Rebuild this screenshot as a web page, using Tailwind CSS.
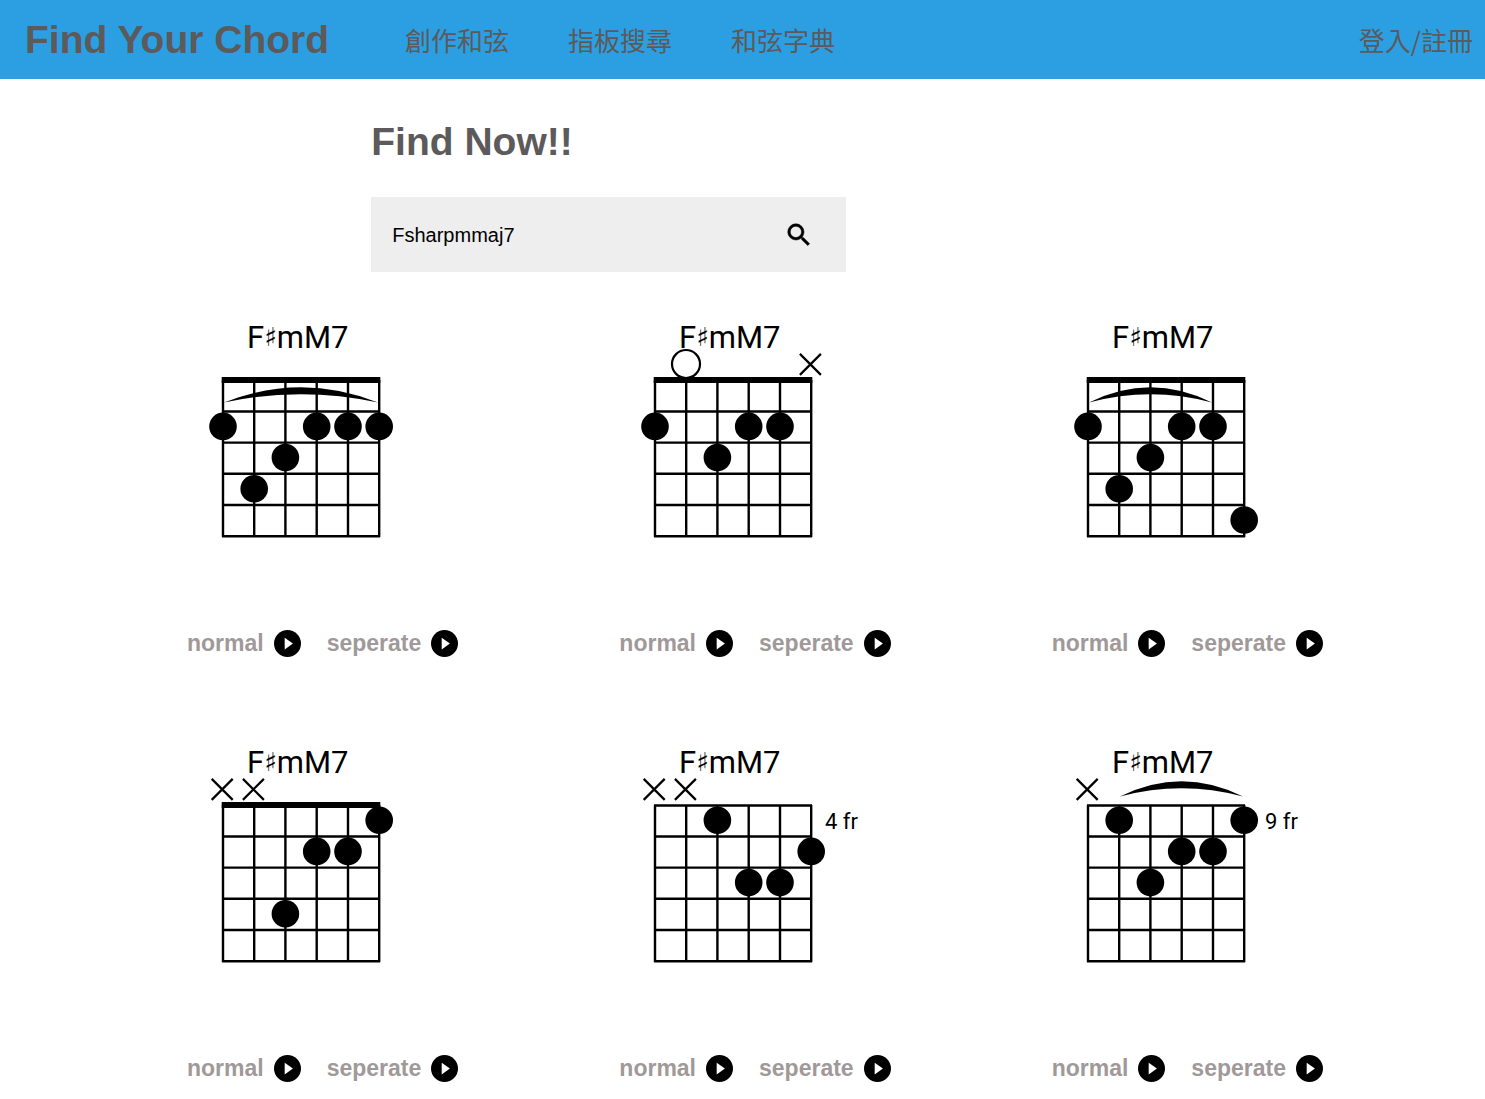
<!DOCTYPE html>
<html lang="zh-Hant">
<head>
<meta charset="utf-8">
<title>Find Your Chord</title>
<script src="https://cdn.jsdelivr.net/npm/@tailwindcss/browser@4"></script>
</head>
<body class="bg-white font-['Liberation_Sans','Noto_Sans_CJK_TC',sans-serif] text-[#5c5a5a]">

<svg class="hidden" aria-hidden="true">
  <symbol id="grid" overflow="visible">
    <path d="M36 65V222M67.2 65V222M98.4 65V222M129.7 65V222M161 65V222M192.2 65V222M35 65.5H193M35 96.5H193M35 127.6H193M35 158.8H193M35 190H193M35 221.2H193" fill="none" stroke="#000" stroke-width="2.4"/>
  </symbol>
  <symbol id="nut" overflow="visible"><path d="M34.7 62H193.3V68H34.7Z"/></symbol>
  <symbol id="dot" overflow="visible"><circle r="13.8"/></symbol>
  <symbol id="mute" overflow="visible"><path d="M-10.5-10.5L10.5 10.5M10.5-10.5L-10.5 10.5" fill="none" stroke="#000" stroke-width="2.2"/></symbol>
  <symbol id="play" viewBox="0 0 26 26"><circle cx="13" cy="13" r="13"/><path d="M10.3 7.5V18.7L18.2 13Z" fill="#fff"/></symbol>
</svg>

<header class="flex h-[79px] items-center bg-[#2c9fe3] pr-3 pl-[25px]">
  <a href="#" class="text-[39px] leading-none font-bold">Find Your Chord</a>
  <nav class="ml-[76px] flex gap-[59px] font-['Noto_Sans_CJK_TC',sans-serif] text-[26px] leading-none">
    <a href="#">創作和弦</a>
    <a href="#">指板搜尋</a>
    <a href="#">和弦字典</a>
  </nav>
  <a href="#" class="ml-auto font-['Noto_Sans_CJK_TC',sans-serif] text-[26px] leading-none">登入/註冊</a>
</header>

<main>
  <section class="ml-[25%] w-[32%] pt-10">
    <h1 class="text-[39px] leading-[46px] font-bold">Find Now!!</h1>
    <form class="mt-8 flex h-[75px] items-center bg-[#eee] pr-8 pl-[21px]">
      <input type="text" aria-label="Chord" value="Fsharpmmaj7" class="min-w-0 flex-1 bg-transparent text-xl text-black outline-none">
      <button type="button" aria-label="Search">
        <svg class="size-[30px]" viewBox="0 0 24 24"><path d="M15.5 14h-.79l-.28-.27A6.47 6.47 0 0 0 16 9.5 6.5 6.5 0 1 0 9.5 16c1.61 0 3.09-.59 4.23-1.57l.27.28v.79l5 4.99L20.49 19l-4.99-5zm-6 0a4.5 4.5 0 1 1 0-9 4.5 4.5 0 0 1 0 9z" fill="#000" stroke="#000" stroke-width=".4"/></svg>
      </button>
    </form>
  </section>

  <section class="mt-[43px] grid grid-cols-3 gap-y-[79px] pr-[81px] pl-[107px]">

    <article class="pl-20">
      <svg class="h-60 w-[260px] fill-black" viewBox="0 0 260 240">
        <text x="60" y="33" class="font-[Roboto,sans-serif] text-[31px]">F<tspan dy="-2" class="font-['DejaVu_Sans'] text-[26px]">♯</tspan><tspan dy="2">mM7</tspan></text>
        <use href="#grid"/><use href="#nut"/>
        <path d="M37 87.5Q114 57 191 87.5Q114 71 37 87.5Z"/>
        <use href="#dot" x="36" y="111.4"/><use href="#dot" x="67.2" y="173.8"/><use href="#dot" x="98.4" y="142.6"/><use href="#dot" x="129.7" y="111.4"/><use href="#dot" x="161" y="111.4"/><use href="#dot" x="192.2" y="111.4"/>
      </svg>
      <div class="mt-[70px] flex h-9 gap-[26px] text-[23px] font-bold text-[#9f9999]">
        <button type="button" class="flex items-center gap-2.5">normal<svg class="size-[27px] fill-black"><use href="#play"/></svg></button>
        <button type="button" class="flex items-center gap-2.5">seperate<svg class="size-[27px] fill-black"><use href="#play"/></svg></button>
      </div>
    </article>

    <article class="pl-20">
      <svg class="h-60 w-[260px] fill-black" viewBox="0 0 260 240">
        <text x="60" y="33" class="font-[Roboto,sans-serif] text-[31px]">F<tspan dy="-2" class="font-['DejaVu_Sans'] text-[26px]">♯</tspan><tspan dy="2">mM7</tspan></text>
        <use href="#grid"/><use href="#nut"/>
        <circle cx="67" cy="49" r="14" fill="none" stroke="#000" stroke-width="2.2"/>
        <use href="#mute" x="191.4" y="49.4"/>
        <use href="#dot" x="36" y="111.4"/><use href="#dot" x="98.4" y="142.6"/><use href="#dot" x="129.7" y="111.4"/><use href="#dot" x="161" y="111.4"/>
      </svg>
      <div class="mt-[70px] flex h-9 gap-[26px] text-[23px] font-bold text-[#9f9999]">
        <button type="button" class="flex items-center gap-2.5">normal<svg class="size-[27px] fill-black"><use href="#play"/></svg></button>
        <button type="button" class="flex items-center gap-2.5">seperate<svg class="size-[27px] fill-black"><use href="#play"/></svg></button>
      </div>
    </article>

    <article class="pl-20">
      <svg class="h-60 w-[260px] fill-black" viewBox="0 0 260 240">
        <text x="60" y="33" class="font-[Roboto,sans-serif] text-[31px]">F<tspan dy="-2" class="font-['DejaVu_Sans'] text-[26px]">♯</tspan><tspan dy="2">mM7</tspan></text>
        <use href="#grid"/><use href="#nut"/>
        <path d="M37 87.5Q98.5 57 160 87.5Q98.5 71 37 87.5Z"/>
        <use href="#dot" x="36" y="111.4"/><use href="#dot" x="67.2" y="173.8"/><use href="#dot" x="98.4" y="142.6"/><use href="#dot" x="129.7" y="111.4"/><use href="#dot" x="161" y="111.4"/><use href="#dot" x="192.2" y="205"/>
      </svg>
      <div class="mt-[70px] flex h-9 gap-[26px] text-[23px] font-bold text-[#9f9999]">
        <button type="button" class="flex items-center gap-2.5">normal<svg class="size-[27px] fill-black"><use href="#play"/></svg></button>
        <button type="button" class="flex items-center gap-2.5">seperate<svg class="size-[27px] fill-black"><use href="#play"/></svg></button>
      </div>
    </article>

    <article class="pl-20">
      <svg class="h-60 w-[260px] fill-black" viewBox="0 0 260 240">
        <text x="60" y="33" class="font-[Roboto,sans-serif] text-[31px]">F<tspan dy="-2" class="font-['DejaVu_Sans'] text-[26px]">♯</tspan><tspan dy="2">mM7</tspan></text>
        <use href="#grid"/><use href="#nut"/>
        <use href="#mute" x="35.2" y="49.4"/><use href="#mute" x="66.4" y="49.4"/>
        <use href="#dot" x="98.4" y="173.8"/><use href="#dot" x="129.7" y="111.4"/><use href="#dot" x="161" y="111.4"/><use href="#dot" x="192.2" y="80.2"/>
      </svg>
      <div class="mt-[70px] flex h-9 gap-[26px] text-[23px] font-bold text-[#9f9999]">
        <button type="button" class="flex items-center gap-2.5">normal<svg class="size-[27px] fill-black"><use href="#play"/></svg></button>
        <button type="button" class="flex items-center gap-2.5">seperate<svg class="size-[27px] fill-black"><use href="#play"/></svg></button>
      </div>
    </article>

    <article class="pl-20">
      <svg class="h-60 w-[260px] fill-black" viewBox="0 0 260 240">
        <text x="60" y="33" class="font-[Roboto,sans-serif] text-[31px]">F<tspan dy="-2" class="font-['DejaVu_Sans'] text-[26px]">♯</tspan><tspan dy="2">mM7</tspan></text>
        <use href="#grid"/>
        <use href="#mute" x="35.2" y="49.4"/><use href="#mute" x="66.4" y="49.4"/>
        <use href="#dot" x="98.4" y="80.2"/><use href="#dot" x="129.7" y="142.6"/><use href="#dot" x="161" y="142.6"/><use href="#dot" x="192.2" y="111.4"/>
        <text x="206" y="89" class="font-[Roboto,sans-serif] text-[22px]">4 fr</text>
      </svg>
      <div class="mt-[70px] flex h-9 gap-[26px] text-[23px] font-bold text-[#9f9999]">
        <button type="button" class="flex items-center gap-2.5">normal<svg class="size-[27px] fill-black"><use href="#play"/></svg></button>
        <button type="button" class="flex items-center gap-2.5">seperate<svg class="size-[27px] fill-black"><use href="#play"/></svg></button>
      </div>
    </article>

    <article class="pl-20">
      <svg class="h-60 w-[260px] fill-black" viewBox="0 0 260 240">
        <text x="60" y="33" class="font-[Roboto,sans-serif] text-[31px]">F<tspan dy="-2" class="font-['DejaVu_Sans'] text-[26px]">♯</tspan><tspan dy="2">mM7</tspan></text>
        <use href="#grid"/>
        <path d="M68 56.5Q129.5 26 191 56.5Q129.5 40 68 56.5Z"/>
        <use href="#mute" x="35.2" y="49.4"/>
        <use href="#dot" x="67.2" y="80.2"/><use href="#dot" x="98.4" y="142.6"/><use href="#dot" x="129.7" y="111.4"/><use href="#dot" x="161" y="111.4"/><use href="#dot" x="192.2" y="80.2"/>
        <text x="213" y="89" class="font-[Roboto,sans-serif] text-[22px]">9 fr</text>
      </svg>
      <div class="mt-[70px] flex h-9 gap-[26px] text-[23px] font-bold text-[#9f9999]">
        <button type="button" class="flex items-center gap-2.5">normal<svg class="size-[27px] fill-black"><use href="#play"/></svg></button>
        <button type="button" class="flex items-center gap-2.5">seperate<svg class="size-[27px] fill-black"><use href="#play"/></svg></button>
      </div>
    </article>

  </section>
</main>
</body>
</html>
